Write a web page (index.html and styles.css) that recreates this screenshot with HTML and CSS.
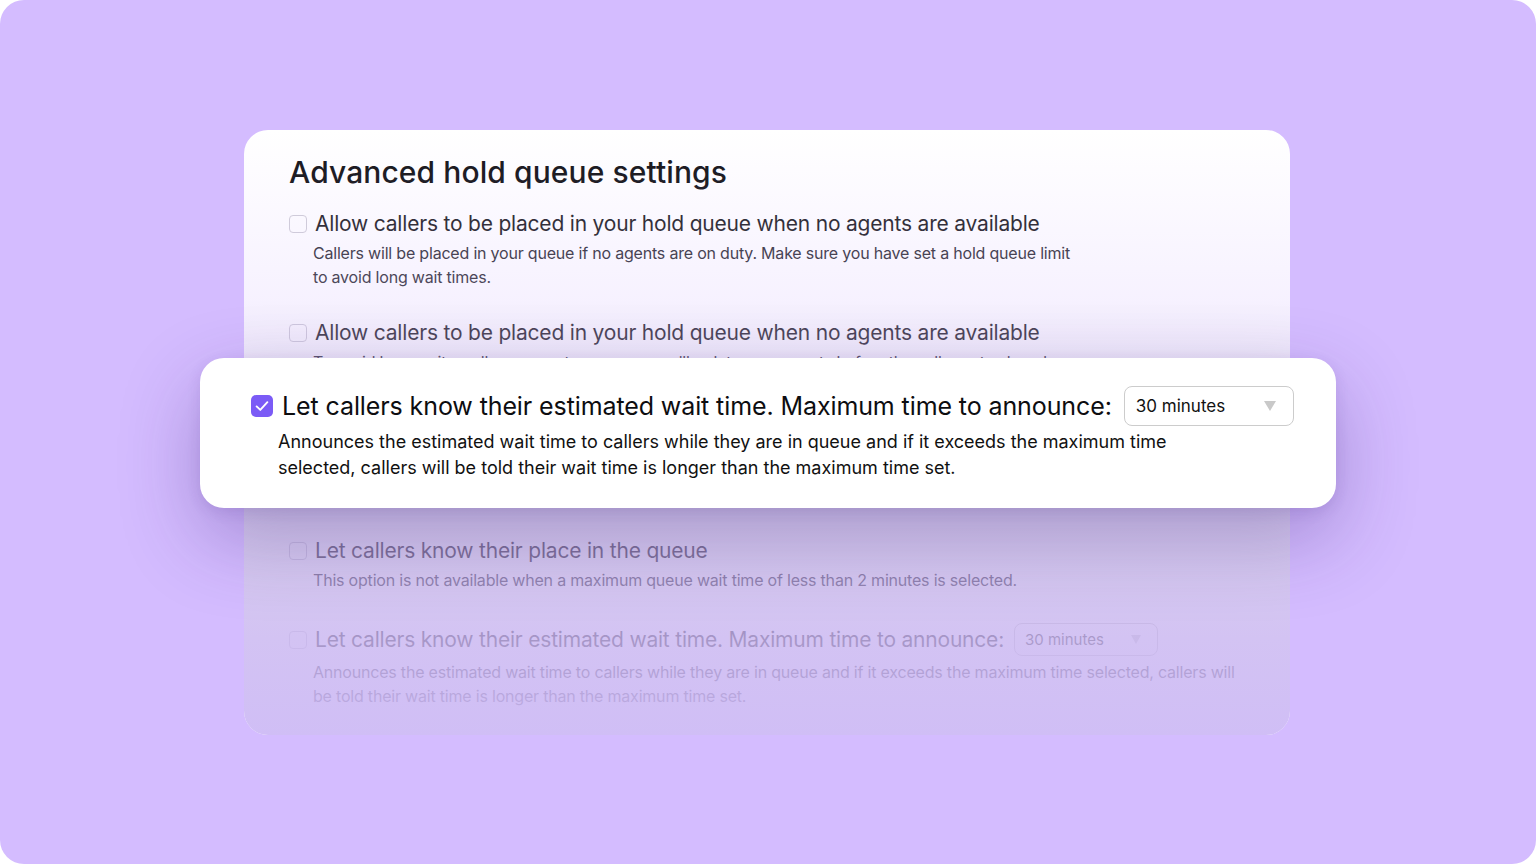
FILE: index.html
```html
<!DOCTYPE html>
<html lang="en">

<head>
    <meta charset="utf-8">
    <meta name="viewport" content="width=device-width, initial-scale=1.0">
    <title>Advanced hold queue settings</title>

    <link rel="stylesheet" href="styles.css">
</head>

<body>
    <div class="frame">
        <section class="settings">
            <h1>Advanced hold queue settings</h1>

            <div class="option">
                <div class="row">
                    <span class="box"></span>
                    <span class="label">Allow callers to be placed in your hold queue when no agents are available</span>
                </div>
                <p class="desc">Callers will be placed in your queue if no agents are on duty. Make sure you have set a hold queue limit<br>to avoid long wait times.</p>
            </div>

            <div class="option">
                <div class="row">
                    <span class="box"></span>
                    <span class="label">Allow callers to be placed in your hold queue when no agents are available</span>
                </div>
                <p class="desc tall">To avoid long waits, callers can set up a queue callback to your agents before the caller gets placed</p>
            </div>

            <!-- sits under the highlighted card -->
            <div class="option covered">
                <div class="row">
                    <span class="box"></span>
                    <span class="label">Let callers know their estimated wait time</span>
                </div>
                <p class="desc">Announces the estimated wait time to callers while they are in queue.<br>Only available when a maximum queue wait time is selected.</p>
            </div>

            <div class="option">
                <div class="row">
                    <span class="box"></span>
                    <span class="label">Let callers know their place in the queue</span>
                </div>
                <p class="desc">This option is not available when a maximum queue wait time of less than 2 minutes is selected.</p>
            </div>

            <div class="option">
                <div class="row">
                    <span class="box"></span>
                    <span class="label">Let callers know their estimated wait time. Maximum time to announce:</span>
                    <div class="select small">
                        <span>30 minutes</span>
                        <svg width="10" height="9" viewBox="0 0 10 9"><path d="M0 0H10L5 9Z" fill="#cfcfcf"/></svg>
                    </div>
                </div>
                <p class="desc">Announces the estimated wait time to callers while they are in queue and if it exceeds the maximum time selected, callers will<br>be told their wait time is longer than the maximum time set.</p>
            </div>

            <div class="focus">
                <div class="row">
                    <span class="box checked">
                        <svg width="22" height="22" viewBox="0 0 22 22"><path d="M5.6 11.4L9.3 14.9L16.4 7.2" fill="none" stroke="#fff" stroke-width="1.9" stroke-linecap="round" stroke-linejoin="round"/></svg>
                    </span>
                    <span class="label">Let callers know their estimated wait time. Maximum time to announce:</span>
                    <div class="select">
                        <span>30 minutes</span>
                        <svg width="12" height="10" viewBox="0 0 12 10"><path d="M0 0H12L6 10Z" fill="#c9c9c9"/></svg>
                    </div>
                </div>
                <p class="desc">Announces the estimated wait time to callers while they are in queue and if it exceeds the maximum time<br>selected, callers will be told their wait time is longer than the maximum time set.</p>
            </div>
        </section>
    </div>
</body>

</html>
```

FILE: styles.css
```css
body {
    margin: 0;
    background: #ffffff;
    font-family: Inter, "Noto Sans", sans-serif;
}

.frame {
    height: 864px;
    border-radius: 24px;
    background: #d4bcff;
    padding: 130px 0 0 244px;
    box-sizing: border-box;
    overflow: hidden;
}

.settings {
    position: relative;
    width: 1046px;
    height: 605px;
    box-sizing: border-box;
    padding: 22px 45px 0;
    background: #ffffff;
    border-radius: 24px;
}

/* fade the back card into the purple */
.settings::after {
    content: "";
    position: absolute;
    inset: 0;
    border-radius: 24px;
    background: linear-gradient(to bottom,
            rgba(212, 188, 255, 0) 0%,
            rgba(212, 188, 255, 0.2) 28%,
            rgba(190, 170, 230, 0.5) 55%,
            rgba(188, 168, 230, 0.6) 70%,
            rgba(200, 180, 240, 0.8) 84%,
            rgba(205, 186, 245, 0.94) 100%);
    z-index: 1;
}

h1 {
    margin: 0;
    font-size: 30px;
    line-height: 40px;
    font-weight: 500;
    color: #141418;
    letter-spacing: 0.1px;
}

.option {
    margin-top: 19px;
}

.option + .option {
    margin-top: 31px;
}

.covered {
    visibility: hidden;
}

.row {
    display: flex;
    align-items: center;
    gap: 8px;
}

.box {
    width: 16px;
    height: 16px;
    border: 1px solid #cfcdd6;
    border-radius: 4px;
    background: #fff;
    flex: none;
}

.label {
    font-size: 21px;
    line-height: 26px;
    color: #1e1d24;
    letter-spacing: -0.2px;
    white-space: nowrap;
}

.desc {
    margin: 4px 0 0 24px;
    font-size: 16px;
    line-height: 24px;
    color: #2f2e36;
    letter-spacing: -0.2px;
    white-space: nowrap;
}

.desc.tall {
    min-height: 48px;
}

.select {
    display: flex;
    align-items: center;
    justify-content: space-between;
    box-sizing: border-box;
    width: 170px;
    height: 40px;
    padding: 0 17px 0 11px;
    margin-left: 2px;
    border: 1px solid #cccccc;
    border-radius: 8px;
    background: #fff;
    font-size: 17px;
    color: #111;
    flex: none;
}

.select.small {
    width: 144px;
    height: 33px;
    padding: 0 16px 0 10px;
    font-size: 15px;
    color: #333;
}

.focus {
    position: absolute;
    left: -44px;
    top: 228px;
    width: 1136px;
    box-sizing: border-box;
    padding: 28px 43px 27px 51px;
    background: #ffffff;
    border-radius: 24px;
    box-shadow: 0 30px 80px rgba(60, 30, 120, 0.32), 0 4px 14px rgba(70, 40, 140, 0.12);
    z-index: 2;
}

.focus .row {
    gap: 9px;
}

.focus .box {
    width: 22px;
    height: 22px;
    border: none;
    border-radius: 5px;
    display: flex;
    align-items: center;
    justify-content: center;
}

.focus .checked {
    background: #7b5bf6;
}

.focus .label {
    font-size: 25px;
    line-height: 30px;
    color: #0d0d10;
    letter-spacing: -0.1px;
    margin-right: 1px;
}

.focus .desc {
    margin: 3px 0 0 27px;
    font-size: 18px;
    line-height: 26px;
    color: #111;
    letter-spacing: 0;
}
```
